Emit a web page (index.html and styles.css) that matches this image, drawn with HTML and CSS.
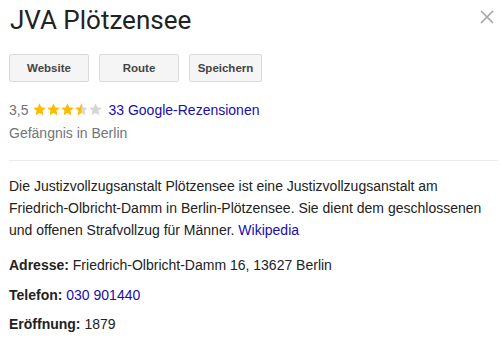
FILE: index.html
```html
<!DOCTYPE html>
<html lang="de">
<head>
<meta charset="UTF-8">
<title>JVA Plötzensee</title>
<meta name="viewport" content="width=device-width,initial-scale=1">
<link rel="stylesheet" href="styles.css">
</head>
<body>

<div class="panel">
  <div class="head">
    <h1>JVA Plötzensee</h1>
    <button class="close" aria-label="Schließen">
      <svg width="14" height="14" viewBox="0 0 14 14"><path d="M1 1L13 13M13 1L1 13" stroke="#a3a3a3" stroke-width="1.6" fill="none"/></svg>
    </button>
  </div>

  <div class="actions">
    <button class="btn">Website</button>
    <button class="btn">Route</button>
    <button class="btn btn-narrow">Speichern</button>
  </div>

  <div class="rating">
    <span class="score">3,5</span>
    <span class="stars">
      <svg width="70" height="13" viewBox="0 0 70 13">
        <defs>
          <path id="star" d="M6.5 0.3L8.4 4.4L12.8 4.8L9.5 7.8L10.4 12.2L6.5 10L2.6 12.2L3.5 7.8L0.2 4.8L4.6 4.4Z"/>
          <clipPath id="half"><rect x="0" y="0" width="6.5" height="13"/></clipPath>
        </defs>
        <use href="#star" x="0" fill="#fbbc04"/>
        <use href="#star" x="14" fill="#fbbc04"/>
        <use href="#star" x="28" fill="#fbbc04"/>
        <use href="#star" x="42" fill="#d6d6d6"/>
        <g transform="translate(42,0)"><use href="#star" fill="#fbbc04" clip-path="url(#half)"/></g>
        <use href="#star" x="56" fill="#d6d6d6"/>
      </svg>
    </span>
    <a href="#">33 Google-Rezensionen</a>
  </div>
  <div class="category">Gefängnis in Berlin</div>

  <hr>

  <p class="desc">Die Justizvollzugsanstalt Plötzensee ist eine Justizvollzugsanstalt am Friedrich-Olbricht-Damm in Berlin-Plötzensee. Sie dient dem geschlossenen und offenen Strafvollzug für Männer. <a href="#">Wikipedia</a></p>

  <div class="facts">
    <div class="fact"><b>Adresse:</b> Friedrich-Olbricht-Damm 16, 13627 Berlin</div>
    <div class="fact"><b>Telefon:</b> <a href="#">030 901440</a></div>
    <div class="fact"><b>Eröffnung:</b> 1879</div>
  </div>
</div>

</body>
</html>
```

FILE: styles.css
```css
*{margin:0;padding:0;box-sizing:border-box}
body{background:#fff;font-family:"Liberation Sans",Arial,sans-serif;font-size:14px;color:#222}
a{color:#1a0dab;text-decoration:none}
.panel{padding:0 9px}
.head{display:flex;justify-content:space-between;align-items:flex-start;height:42px}
h1{font-family:Roboto,"Open Sans",sans-serif;font-weight:400;font-size:26px;line-height:40px;color:#222;padding-left:1px}
.close{border:none;background:none;width:14px;height:14px;margin:10px -1px 0 0;cursor:pointer;display:flex}
.actions{display:flex;gap:10px;margin-top:12px}
.btn{width:80px;height:28px;border:1px solid #dadada;border-radius:2px;background:#f5f5f5;font-family:"Liberation Sans",Arial,sans-serif;font-size:11.5px;font-weight:700;color:#444;cursor:pointer}
.btn-narrow{width:73px}
.rating{display:flex;align-items:center;gap:4px;margin-top:19px;height:18px}
.score{color:#70757a}
.stars{display:flex;margin-top:-2px;margin-left:1px}
.rating a{margin-left:1px}
.category{color:#70757a;margin-top:5px;line-height:18px}
hr{border:none;border-top:1px solid #ebebeb;margin:18px -5px 0 0}
.desc{line-height:22px;margin-top:14px}
.facts{margin-top:15px}
.fact{line-height:18px;margin-bottom:11.6px}
.fact b{color:#222;font-weight:700}
```
